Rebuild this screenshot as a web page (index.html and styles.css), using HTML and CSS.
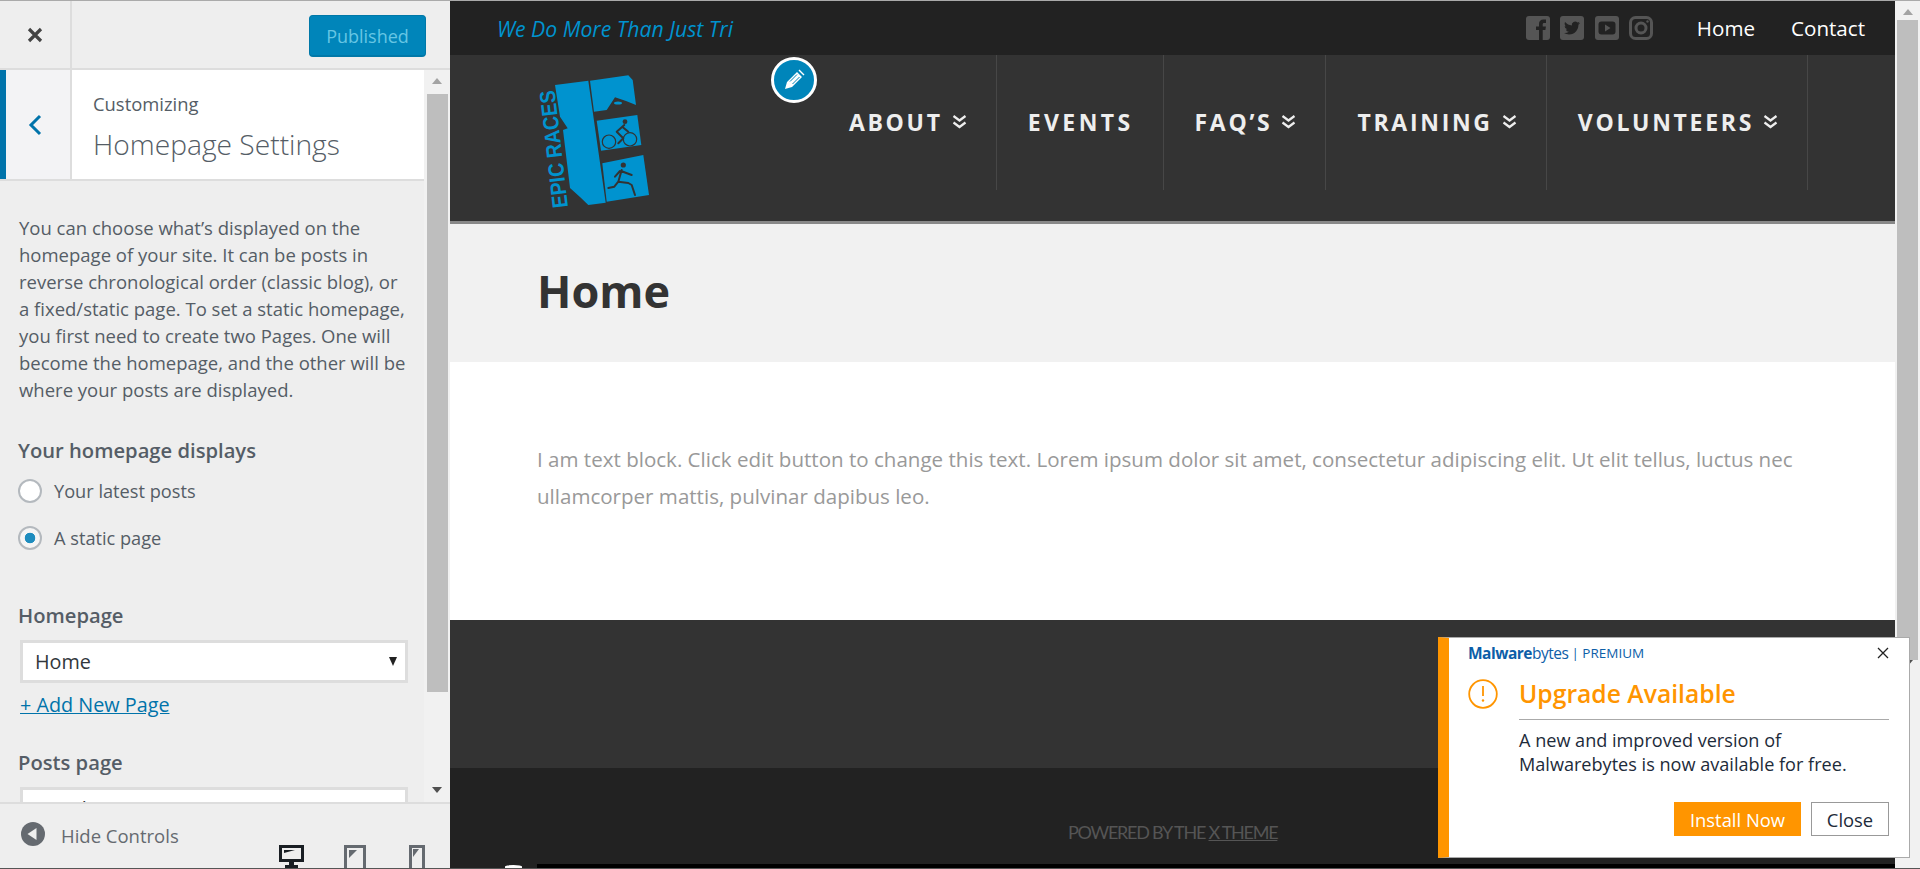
FILE: index.html
```html
<!DOCTYPE html>
<html lang="en">
<head>
    <meta charset="UTF-8">
    <meta name="viewport" content="width=device-width, initial-scale=1.0">
    <title>Customize: Homepage Settings</title>
    <link rel="stylesheet" href="styles.css">
</head>
<body>
    <aside class="sidebar">
        <div class="actions">
            <a class="close-box" href="#">
                <svg width="18" height="18" viewBox="0 0 18 18"><path d="M3 3l12 12M15 3L3 15" stroke="#444" stroke-width="3.2" fill="none"/></svg>
            </a>
            <button class="publish" type="button">Published</button>
        </div>
        <div class="scroll-area">
            <div class="panel">
                <div class="section-head">
                    <a class="back" href="#">
                        <svg width="14" height="22" viewBox="0 0 14 22"><path d="M12 2L3 11l9 9" stroke="#0073aa" stroke-width="3" fill="none"/></svg>
                    </a>
                    <div class="section-title">
                        <span class="crumb">Customizing</span>
                        <h2>Homepage Settings</h2>
                    </div>
                </div>
                <div class="controls">
                    <p class="desc">You can choose what’s displayed on the homepage of your site. It can be posts in reverse chronological order (classic blog), or a fixed/static page. To set a static homepage, you first need to create two Pages. One will become the homepage, and the other will be where your posts are displayed.</p>
                    <div class="field-title radios-title">Your homepage displays</div>
                    <label class="radio"><input type="radio" name="front"> Your latest posts</label>
                    <label class="radio"><input type="radio" name="front" checked> A static page</label>
                    <div class="field-title home-title">Homepage</div>
                    <div class="select-wrap"><select><option>Home</option></select></div>
                    <a class="add-page" href="#">+ Add New Page</a>
                    <div class="field-title posts-title">Posts page</div>
                    <div class="select-wrap"><select><option>— Select —</option></select></div>
                </div>
            </div>
            <div class="scrollbar side-bar">
                <span class="arrow up"></span>
                <span class="thumb side-thumb"></span>
                <span class="arrow down"></span>
            </div>
        </div>
        <div class="side-foot">
            <a class="hide-controls" href="#">
                <svg width="24" height="24" viewBox="0 0 24 24"><circle cx="12" cy="12" r="12" fill="#656a70"/><path d="M15.5 6v12L6.5 12z" fill="#eee"/></svg>
                Hide Controls
            </a>
            <div class="devices">
                <svg class="dev-desktop" width="25" height="24" viewBox="0 0 25 24"><path d="M0 0h25v17H15v3h4v4H6v-4h4v-3H0z" fill="#191e23"/><path d="M3 3h19v11H3z" fill="#eee"/><path d="M5 5h11l-11 3z" fill="#191e23"/></svg>
                <svg class="dev-tablet" width="22" height="25" viewBox="0 0 22 25"><rect x="1.5" y="1.5" width="19" height="24" fill="#eee" stroke="#656a70" stroke-width="3"/><path d="M5 5h8l-8 8z" fill="#656a70"/></svg>
                <svg class="dev-phone" width="16" height="25" viewBox="0 0 16 25"><rect x="1.5" y="1.5" width="13" height="24" fill="#eee" stroke="#656a70" stroke-width="3"/><path d="M4 4h6l-6 8z" fill="#656a70"/></svg>
            </div>
        </div>
    </aside>

    <main class="preview">
        <div class="utility">
            <span class="tagline">We Do More Than Just Tri</span>
            <div class="social">
                <svg width="24" height="24" viewBox="0 0 24 24"><rect width="24" height="24" rx="3" fill="#555"/><path d="M13 24v-10h-3v-3.5h3V8c0-3 1.8-4.500 4.300-4.500H20V7h-1.800c-1.200 0-1.500.6-1.500 1.500v2h3.200l-.5 3.500h-2.700v10z" fill="#222"/></svg>
                <svg width="24" height="24" viewBox="0 0 24 24"><rect width="24" height="24" rx="3" fill="#555"/><path transform="translate(4 4) scale(.667)" d="M23.953 4.57a10 10 0 01-2.825.775 4.958 4.958 0 002.163-2.723c-.951.555-2.005.959-3.127 1.184a4.92 4.92 0 00-8.384 4.482C7.69 8.095 4.067 6.13 1.64 3.162a4.822 4.822 0 00-.666 2.475c0 1.71.87 3.213 2.188 4.096a4.904 4.904 0 01-2.228-.616v.06a4.923 4.923 0 003.946 4.827 4.996 4.996 0 01-2.212.085 4.936 4.936 0 004.604 3.417 9.867 9.867 0 01-6.102 2.105c-.39 0-.779-.023-1.17-.067a13.995 13.995 0 007.557 2.209c9.053 0 13.998-7.496 13.998-13.985 0-.21 0-.42-.015-.63A9.935 9.935 0 0024 4.590z" fill="#222"/></svg>
                <svg width="24" height="24" viewBox="0 0 24 24"><rect width="24" height="24" rx="3" fill="#555"/><rect x="3.500" y="5.500" width="17" height="13" rx="3" fill="#222"/><path d="M10 8.500v7l5.500-3.500z" fill="#555"/></svg>
                <svg width="24" height="24" viewBox="0 0 24 24" fill="none" stroke="#555"><rect x="1.500" y="1.500" width="21" height="21" rx="5" stroke-width="3"/><circle cx="12" cy="12" r="5" stroke-width="3"/><circle cx="18.500" cy="5.500" r="1.200" fill="#555" stroke="none"/></svg>
            </div>
            <nav class="util-links">
                <a href="#">Home</a>
                <a href="#">Contact</a>
            </nav>
        </div>

        <header class="masthead">
            <svg class="logo" width="120" height="140" viewBox="0 0 120 140">
                <g fill="#0093cf">
                    <path d="M25 15L58.300 10.700 75.700 132.700 58.300 135 50 127 40 118 33 60 37.700 58.300 30 46.700z"/>
                    <path d="M60 10.700L98.300 5.300 102.700 10 106 35 96 31 85 27.300 76.700 40 64 41.700z"/>
                    <path d="M66.700 50.700L107.300 45 111.300 75 71 80.700z"/>
                    <path d="M72.300 93.300L113.300 85 119 125 76.700 131.700z"/>
                    <text class="logo-text" transform="translate(38 137) rotate(-96.500)" textLength="118" lengthAdjust="spacingAndGlyphs">EPIC RACES</text>
                </g>
                <ellipse cx="88" cy="33" rx="4" ry="1.600" fill="#0093cf"/>
                <g fill="none" stroke="#333" stroke-width="1.200">
                    <circle cx="79" cy="71.700" r="6.700"/>
                    <circle cx="100" cy="69.300" r="6.700"/>
                </g>
                <g fill="none" stroke="#333" stroke-width="2" stroke-linecap="round" stroke-linejoin="round">
                    <path d="M94.300 55l-7.600 6.700 6.600 6.600-5 5M92.500 57l5.800 4.700"/>
                    <path d="M91.700 100l-3.400 11.700-4 5-6 1.300M88.300 111.700l10 1.300 3.400 2 3.300 10M91 101l10.700 4M90 101l-5 5.700"/>
                </g>
                <circle cx="95" cy="51.700" r="2.400" fill="#333"/>
                <circle cx="93.300" cy="95" r="2.600" fill="#333"/>
            </svg>
            <a class="edit-pencil" href="#">
                <svg width="24" height="24" viewBox="0 0 24 24"><path d="M3 21l2-7L15 4l5 5-10 10zM16.500 2.500l1-1 5 5-1 1z" fill="#fff"/><path d="M8 13.500l7-7M10.500 16l7-7" stroke="#0085ba" stroke-width="1"/></svg>
            </a>
            <nav class="main-nav">
                <a href="#" class="has-sub">ABOUT <svg width="15" height="14" viewBox="0 0 15 14"><path d="M1.500 1l6 4.500 6-4.500M1.500 7.500l6 4.500 6-4.500" stroke="#eee" stroke-width="2.200" fill="none"/></svg></a>
                <a href="#" class="nav-events">EVENTS</a>
                <a href="#" class="has-sub">FAQ’S <svg width="15" height="14" viewBox="0 0 15 14"><path d="M1.500 1l6 4.500 6-4.500M1.500 7.500l6 4.500 6-4.500" stroke="#eee" stroke-width="2.200" fill="none"/></svg></a>
                <a href="#" class="has-sub">TRAINING <svg width="15" height="14" viewBox="0 0 15 14"><path d="M1.500 1l6 4.500 6-4.500M1.500 7.500l6 4.500 6-4.500" stroke="#eee" stroke-width="2.200" fill="none"/></svg></a>
                <a href="#" class="has-sub">VOLUNTEERS <svg width="15" height="14" viewBox="0 0 15 14"><path d="M1.500 1l6 4.500 6-4.500M1.500 7.500l6 4.500 6-4.500" stroke="#eee" stroke-width="2.200" fill="none"/></svg></a>
            </nav>
        </header>

        <section class="title-band">
            <h1>Home</h1>
        </section>
        <section class="content">
            <p>I am text block. Click edit button to change this text. Lorem ipsum dolor sit amet, consectetur adipiscing elit. Ut elit tellus, luctus nec ullamcorper mattis, pulvinar dapibus leo.</p>
        </section>
        <section class="widgets"></section>
        <footer class="site-foot">
            <span>POWERED BY THE <a href="#">X THEME</a></span>
            <div class="black-bar"></div>
            <div class="white-blob"></div>
        </footer>
    </main>

    <div class="scrollbar page-bar">
        <span class="arrow up"></span>
        <span class="thumb page-thumb"></span>
        <span class="arrow down"></span>
    </div>

    <div class="mb-popup">
        <div class="mb-head">
            <span class="mb-logo"><b>Malware</b>bytes</span>
            <span class="mb-tier">| PREMIUM</span>
            <svg class="mb-x" width="12" height="12" viewBox="0 0 12 12"><path d="M1 1l10 10M11 1L1 11" stroke="#222" stroke-width="1.300" fill="none"/></svg>
        </div>
        <div class="mb-title-row">
            <svg width="30" height="30" viewBox="0 0 30 30"><circle cx="15" cy="15" r="13.800" fill="none" stroke="#ff9500" stroke-width="1.800"/><path d="M15 7v10" stroke="#ff9500" stroke-width="1.800"/><circle cx="15" cy="21.500" r="1.200" fill="#ff9500"/></svg>
            <h3>Upgrade Available</h3>
        </div>
        <p class="mb-text">A new and improved version of Malwarebytes is now available for free.</p>
        <div class="mb-buttons">
            <button class="mb-install" type="button">Install Now</button>
            <button class="mb-close" type="button">Close</button>
        </div>
    </div>
</body>
</html>
```

FILE: styles.css
```css
* {
    box-sizing: border-box;
}
html, body {
    margin: 0;
    height: 100%;
}
body {
    display: flex;
    height: 869px;
    overflow: hidden;
    position: relative;
    border-top: 1px solid #aaa;
    border-bottom: 1px solid #555;
    font-family: "Open Sans", "Noto Sans", sans-serif;
    background-color: #fff;
}
a {
    text-decoration: none;
}

/* customizer sidebar */
.sidebar {
    width: 450px;
    flex: none;
    display: flex;
    flex-direction: column;
    background-color: #eee;
    color: #555d66;
}
.actions {
    height: 69px;
    flex: none;
    display: flex;
    align-items: flex-start;
    justify-content: space-between;
    border-bottom: 2px solid #ddd;
    padding-right: 24px;
}
.close-box {
    width: 72px;
    height: 67px;
    display: flex;
    align-items: center;
    justify-content: center;
    border-right: 2px solid #ddd;
}
.publish {
    width: 117px;
    height: 42px;
    margin-top: 14px;
    padding: 0;
    background-color: #0085ba;
    color: #66c6e4;
    border: 1px solid #0078a8;
    border-bottom-width: 2px;
    border-radius: 4px;
    font-family: inherit;
    font-size: 18px;
}
.scroll-area {
    flex: 1;
    min-height: 0;
    display: flex;
    overflow: hidden;
}
.panel {
    width: 424px;
    flex: none;
}
.section-head {
    height: 111px;
    display: flex;
    border-bottom: 2px solid #ddd;
    background-color: #fff;
}
.back {
    width: 72px;
    flex: none;
    display: flex;
    align-items: center;
    justify-content: center;
    padding-right: 6px;
    background-color: #f3f3f5;
    border-left: 6px solid #0073aa;
    border-right: 2px solid #ddd;
}
.section-title {
    padding: 20px 0 0 21px;
}
.crumb {
    display: block;
    font-size: 18.400px;
    line-height: 27px;
}
.section-title h2 {
    margin: 7px 0 0;
    font-size: 28.200px;
    line-height: 40px;
    font-weight: 300;
}
.controls {
    padding: 33px 20px 0 18px;
}
.desc {
    width: 387px;
    margin: 0 0 0 1px;
    font-size: 18.500px;
    line-height: 27px;
}
.field-title {
    font-size: 20.200px;
    line-height: 27px;
    font-weight: 600;
}
.radios-title {
    margin-top: 34px;
}
.radio {
    display: flex;
    align-items: center;
    gap: 12px;
    height: 47px;
    font-size: 18.200px;
}
.radios-title + .radio {
    margin-top: 3px;
}
.radio input {
    appearance: none;
    width: 24px;
    height: 24px;
    margin: 0;
    border: 2px solid #b4b9be;
    border-radius: 50%;
    background-color: #fff;
}
.radio input:checked {
    background: radial-gradient(circle, #1e8cbe 0 5px, #f5f5f5 5.600px);
}
.home-title {
    margin-top: 41px;
}
.select-wrap {
    position: relative;
    width: 388px;
    height: 43px;
    margin: 11px 0 0 2px;
}
.select-wrap::after {
    content: "";
    position: absolute;
    right: 11px;
    top: 17px;
    border-left: 4.500px solid transparent;
    border-right: 4.500px solid transparent;
    border-top: 9px solid #222;
}
.select-wrap select {
    appearance: none;
    width: 100%;
    height: 100%;
    padding: 0 0 0 12px;
    border: 3px solid #ddd;
    border-radius: 0;
    background-color: #fff;
    color: #32373c;
    font-family: inherit;
    font-size: 19.800px;
}
.add-page {
    display: inline-block;
    margin: 8px 0 0 2px;
    color: #0073aa;
    font-size: 19.800px;
    line-height: 27px;
    font-weight: 500;
    text-decoration: underline;
}
.posts-title {
    margin-top: 31px;
}

/* fake scrollbars */
.scrollbar {
    display: flex;
    flex-direction: column;
    align-items: center;
    background-color: #f1f1f1;
}
.side-bar {
    width: 26px;
    flex: none;
}
.page-bar {
    width: 25px;
    flex: none;
}
.arrow {
    flex: none;
    width: 0;
    height: 0;
    border-left: 5.500px solid transparent;
    border-right: 5.500px solid transparent;
}
.arrow.up {
    margin-top: 8px;
    border-bottom: 6px solid #a3a3a3;
}
.arrow.down {
    border-top: 6px solid #505050;
}
.thumb {
    width: 21px;
    background-color: #bebebe;
}
.side-thumb {
    height: 598px;
    margin-top: 10px;
}
.side-bar .arrow.down {
    margin-top: 95px;
}
.page-thumb {
    height: 640px;
    margin-top: 5px;
}

.side-foot {
    height: 66px;
    flex: none;
    display: flex;
    justify-content: space-between;
    border-top: 2px solid #ddd;
    overflow: hidden;
    background-color: #eee;
}
.hide-controls {
    display: flex;
    align-items: center;
    gap: 16px;
    height: 63px;
    padding-left: 21px;
    color: #656a70;
    font-size: 18.500px;
}
.hide-controls svg {
    margin-top: -4px;
}
.devices {
    display: flex;
    align-items: flex-start;
    gap: 40px;
    padding: 41px 25px 0 0;
}
.devices .dev-phone {
    margin-left: 3px;
}

/* site preview */
.preview {
    flex: 1;
    min-width: 0;
    display: flex;
    flex-direction: column;
}
.utility {
    height: 54px;
    flex: none;
    display: flex;
    align-items: center;
    padding: 0 30px 0 47px;
    background-color: #222;
}
.tagline {
    color: #0093cf;
    font-size: 21.200px;
    font-style: italic;
}
.social {
    display: flex;
    gap: 10.300px;
    margin: 0 0 0 auto;
}
.util-links {
    display: flex;
    gap: 36px;
    margin-left: 44px;
}
.util-links a {
    color: #fff;
    font-size: 20.600px;
}
.masthead {
    height: 169px;
    flex: none;
    position: relative;
    display: flex;
    align-items: flex-start;
    padding: 15px 87px 0 80px;
    background-color: #333;
    border-bottom: 3px solid #888;
}
.logo-text {
    font-family: "Liberation Sans", Arial, sans-serif;
    font-size: 22px;
    font-weight: 700;
}
.edit-pencil {
    position: absolute;
    left: 321px;
    top: 2px;
    width: 46px;
    height: 46px;
    display: flex;
    align-items: center;
    justify-content: center;
    background-color: #0085ba;
    border: 3px solid #fff;
    border-radius: 50%;
}
.main-nav {
    display: flex;
    margin: -15px 0 0 auto;
    height: 135px;
}
.main-nav a {
    display: flex;
    align-items: center;
    gap: 9px;
    padding: 0 29px 1px 31px;
    border-right: 1px solid #474747;
    color: #eee;
    font-size: 23px;
    font-weight: 700;
    letter-spacing: 2.700px;
}
.main-nav .nav-events {
    letter-spacing: 3.400px;
}
.title-band {
    height: 138px;
    flex: none;
    display: flex;
    align-items: center;
    padding: 0 0 6px 87px;
    background-color: #f1f1f1;
}
.title-band h1 {
    margin: 0;
    color: #333;
    font-size: 45px;
    font-weight: 700;
}
.content {
    height: 258px;
    flex: none;
    padding: 79px 80px 0 87px;
    background-color: #fff;
}
.content p {
    margin: 0;
    color: #999;
    font-size: 20.550px;
    line-height: 37px;
}
.widgets {
    height: 148px;
    flex: none;
    background-color: #333;
}
.site-foot {
    flex: 1;
    position: relative;
    padding: 54px 0 0 618px;
    background-color: #222;
    color: #555;
    font-family: "Lato", sans-serif;
    font-size: 18px;
    font-weight: 400;
    line-height: 20px;
    letter-spacing: -1.250px;
}
.site-foot a {
    color: #555;
    text-decoration: underline;
}
.black-bar {
    position: absolute;
    left: 87px;
    right: 0;
    bottom: 0;
    height: 4px;
    background-color: #000;
}
.white-blob {
    position: absolute;
    left: 55px;
    bottom: 0;
    width: 17px;
    height: 3px;
    border-radius: 50% 50% 0 0;
    background-color: #fff;
}

/* malwarebytes popup */
.mb-popup {
    position: absolute;
    left: 1438px;
    top: 636px;
    width: 472px;
    height: 221px;
    padding: 0 20px 0 19px;
    border: 1px solid #aaa;
    border-left: 11px solid #ff9500;
    background-color: #fff;
    color: #1d2b3a;
}
.mb-head {
    display: flex;
    align-items: center;
    height: 30px;
    color: #0d5ea8;
}
.mb-logo {
    font-size: 15.500px;
    letter-spacing: -0.500px;
}
.mb-tier {
    margin-left: 3px;
    font-size: 13.500px;
}
.mb-x {
    margin-left: auto;
}
.mb-title-row {
    display: flex;
    align-items: center;
    gap: 21px;
    height: 51px;
}
.mb-title-row h3 {
    margin: 0;
    color: #ff9500;
    font-size: 24.700px;
    font-weight: 600;
}
.mb-text {
    margin: 0 0 0 51px;
    padding: 8px 20px 0 0;
    border-top: 1px solid #aaa;
    font-size: 18.100px;
    line-height: 24px;
}
.mb-buttons {
    display: flex;
    justify-content: flex-end;
    gap: 10px;
    margin-top: 26px;
}
.mb-buttons button {
    height: 34px;
    padding: 0;
    font-family: inherit;
    font-size: 18.400px;
}
.mb-install {
    width: 127px;
    border: none;
    background-color: #ff9500;
    color: #fff;
}
.mb-close {
    width: 78px;
    border: 1px solid #999;
    background-color: #fff;
    color: #1d2b3a;
}
```
